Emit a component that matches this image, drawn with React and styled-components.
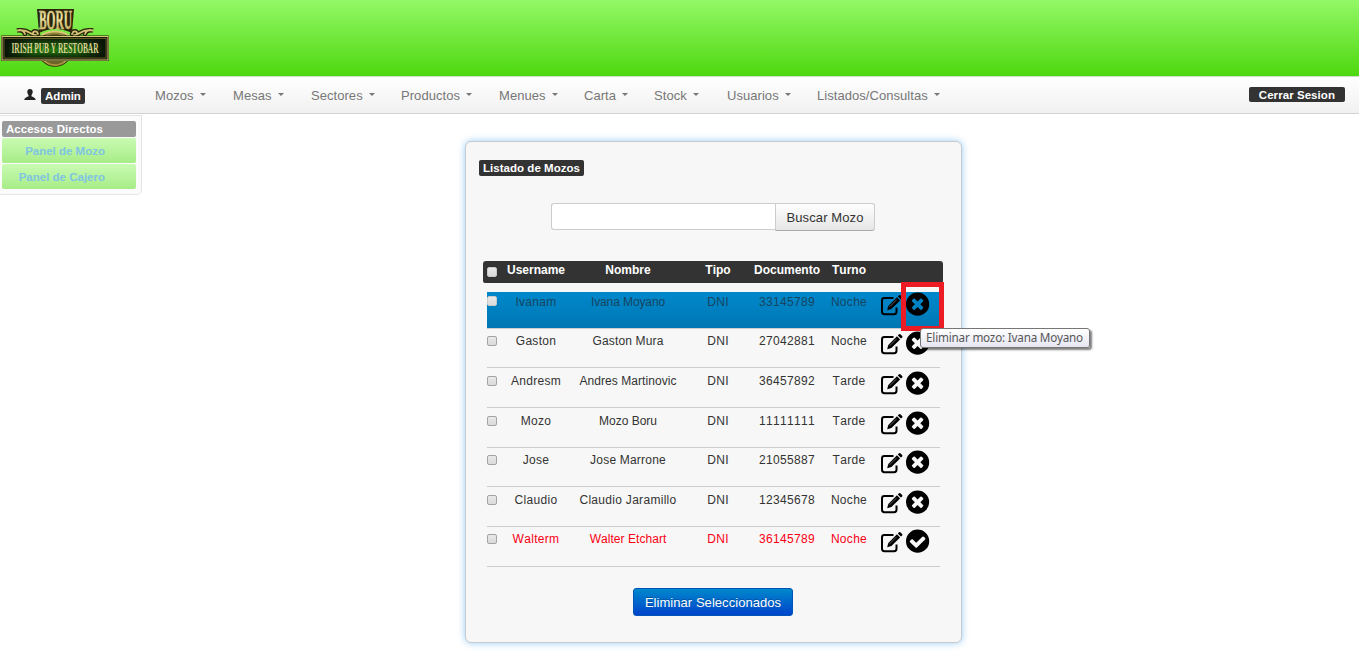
import React from "react";
import styled, { createGlobalStyle, css } from "styled-components";

const GlobalStyle = createGlobalStyle`
  *, *::before, *::after { box-sizing: border-box; }
  html, body { margin: 0; background: #fff; overflow: hidden; }
  body { font-family: "Liberation Sans", Arial, sans-serif; font-size: 13px; color: #333; font-kerning: none; }
`;

const Page = styled.div`
  display: flex;
  flex-direction: column;
  height: 665px;
`;

const Banner = styled.header`
  flex: none;
  height: 76px;
  background: linear-gradient(#93f866, #4ed80f);
`;

const Navbar = styled.nav`
  flex: none;
  display: flex;
  align-items: flex-start;
  height: 38px;
  border-top: 1px solid #d0dccb;
  border-bottom: 1px solid #d2d2d2;
  background: linear-gradient(#fff, #f1f1f1);
`;

const User = styled.div`
  flex: none;
  display: flex;
  width: 155px;
  padding: 11px 0 0 24px;
  gap: 5px;
`;

const Label = styled.span`
  display: block;
  height: ${(p) => p.$h || 16}px;
  line-height: 16px;
  padding: 0 ${(p) => p.$px || 4}px;
  border-radius: 2px;
  background: ${(p) => (p.$muted ? "#999" : "#333")};
  color: #fff;
  font-size: 11.5px;
  font-weight: bold;
  letter-spacing: ${(p) => p.$ls || 0.03}px;
  white-space: nowrap;
`;

const Menu = styled.ul`
  display: flex;
  flex: 1;
  margin: 0;
  padding: 0;
  list-style: none;
`;

const MenuItem = styled.li`
  flex: none;
  display: flex;
  width: ${(p) => p.$w}px;
  height: 36px;
  line-height: 37px;
  color: #777;
  letter-spacing: 0.05px;
  white-space: nowrap;

  &::after {
    content: "";
    margin: 16px 0 0 6px;
    width: 0;
    height: 0;
    border: 3.5px solid transparent;
    border-top-color: #777;
    border-bottom: 0;
  }
`;

const Logout = styled.div`
  padding: 10px 14px 0 0;
`;

const Body = styled.div`
  display: flex;
  align-items: flex-start;
`;

const Sidebar = styled.aside`
  flex: none;
  display: flex;
  flex-direction: column;
  gap: 1px;
  width: 142px;
  height: 80px;
  margin-top: 1px;
  padding: 5px 5px 0 2px;
  border: 1px solid #e4e4e4;
  border-left: 0;
  border-radius: 0 0 5px 0;
  background: #fbfbfb;
`;

const Shortcut = styled.a`
  height: 25px;
  line-height: 26px;
  padding-right: 31px;
  border-radius: 2px;
  background: linear-gradient(#c9fbb3, #a7ec87);
  color: #80c4e1;
  font-size: 11.5px;
  font-weight: bold;
  text-align: right;
`;

const Card = styled.main`
  position: relative;
  width: 497px;
  height: 502px;
  margin: 27px 0 0 323px;
  padding: 18px 18px 0 13px;
  border: 1px solid #c6cbd0;
  border-radius: 6px;
  background: #f7f7f7;
  box-shadow: 0 0 7px rgba(82, 168, 236, 0.6);
`;

const Title = styled.div`
  display: flex;
`;

const Search = styled.form`
  display: flex;
  margin: 27px 0 0 72px;
`;

const SearchInput = styled.input`
  width: 224px;
  height: 27px;
  border: 1px solid #ccc;
  border-right: 0;
  border-radius: 3px 0 0 3px;
  background: #fff;
`;

const SearchButton = styled.button`
  width: 100px;
  height: 28px;
  padding: 0;
  border: 1px solid #ccc;
  border-bottom-color: #aaa;
  border-radius: 0 3px 3px 0;
  background: linear-gradient(#fefefe, #e6e6e6);
  color: #333;
  font: 13px "Liberation Sans", Arial, sans-serif;
  letter-spacing: 0.1px;
`;

const columns = "12px 74px 110px 70px 68px 56px 1fr";

const TableHead = styled.div`
  display: grid;
  grid-template-columns: ${columns};
  width: 460px;
  height: 22px;
  margin: 30px 0 9px 4px;
  padding: 0 0 0 4px;
  border-radius: 3px 3px 2px 2px;
  background: #333;
  color: #fff;
  font-size: 12px;
  font-weight: bold;
  line-height: 18px;
  text-align: center;
`;

const Row = styled.div`
  display: grid;
  grid-template-columns: ${columns};
  width: 453px;
  height: 39.67px;
  margin-left: 8px;
  padding-top: 2.6px;
  border-bottom: 1px solid #ccc;
  color: ${(p) => (p.$inactive ? "#fa0014" : "#333")};
  font-size: 12px;
  letter-spacing: 0.3px;
  line-height: 20px;
  text-align: center;
  white-space: nowrap;
  ${(p) =>
    p.$hovered &&
    css`
      height: 36.6px;
      padding-top: 0;
      background: linear-gradient(#08c, #0077b3);
      color: #17455f;
    `}
`;

const FullName = styled.span`
  letter-spacing: ${(p) => p.$ls}px;
`;

const Check = styled.i`
  display: block;
  width: 10px;
  height: 10px;
  margin-top: ${(p) => p.$top}px;
  border: 1px solid ${(p) => (p.$light ? "#c9c9c9" : "#a3a3a3")};
  border-radius: 2px;
  background: linear-gradient(#e9e9e9, #dadada);
`;

const Actions = styled.div`
  display: flex;
  gap: 3.4px;
  padding-left: 3px;
  color: #000;
`;

const SubmitRow = styled.div`
  display: flex;
  margin: 21px 0 0 154px;
`;

const DeleteButton = styled.button`
  width: 160px;
  height: 28px;
  padding: 1px 0 0;
  border: 1px solid #0055b8;
  border-radius: 3px;
  background: linear-gradient(#0088cc, #0044cc);
  color: #fff;
  font: 13px "Liberation Sans", Arial, sans-serif;
  letter-spacing: 0.05px;
  text-shadow: 0 -1px 0 rgba(0, 0, 0, 0.25);
`;

const Highlight = styled.div`
  position: absolute;
  left: 435px;
  top: 140px;
  width: 43px;
  height: 49px;
  border: 5px solid #ed1c24;
`;

const Tooltip = styled.div`
  position: absolute;
  left: 454px;
  top: 186px;
  width: 170px;
  height: 20px;
  padding-right: 1px;
  border: 1px solid #767676;
  border-radius: 3px;
  background: linear-gradient(#fff, #e5e6f1);
  box-shadow: 2px 2px 2px rgba(0, 0, 0, 0.5);
  color: #575757;
  font: 11.7px/17px "Noto Sans", "Open Sans", sans-serif;
  letter-spacing: -0.2px;
  text-align: center;
  white-space: nowrap;
`;

const Svg = styled.svg`
  display: block;
  flex: none;
  overflow: visible;
`;

const disc = "M896 128a768 768 0 1 0 0 1536a768 768 0 1 0 0-1536z";
const cross =
  "M1277 1122q0-26-19-45l-181-181 181-181q19-19 19-45 0-27-19-46l-90-90q-19-19-46-19-26 0-45 19l-181 181-181-181q-19-19-45-19-27 0-46 19l-90 90q-19 19-19 46 0 26 19 45l181 181-181 181q-19 19-19 45 0 27 19 46l90 90q19 19 46 19 26 0 45-19l181-181 181 181q19 19 45 19 27 0 46-19l90-90q19-19 19-46z";
const tick =
  "M1412 734q0-28-18-46l-91-90q-19-19-45-19t-45 19l-408 407-226-226q-19-19-45-19t-45 19l-91 90q-18 18-18 46 0 27 18 45l362 362q19 19 45 19 27 0 46-19l543-543q18-18 18-45z";

// A filled disc with the cross or tick cut out of it.
function StatusIcon({ inactive }) {
  return (
    <Svg width="23.2" height="23.2" viewBox="128 90 1536 1536">
      <path fillRule="evenodd" d={disc + (inactive ? tick : cross)} />
    </Svg>
  );
}

function EditIcon() {
  return (
    <Svg width="23" height="26" viewBox="0 0 23 26">
      <path
        d="M13.5 6H4.4Q2 6 2 8.4V19.8Q2 22.2 4.4 22.2H14.1Q16.5 22.2 16.5 19.8V15.5"
        fill="none"
        stroke="#000"
        strokeWidth="2"
      />
      <path d="M7.2 18.2L8.3 14L17 5.3L20.1 8.4L11.4 17.1Z" />
      <path d="M17.8 4.5L19 3.3Q19.8 2.7 20.6 3.4L22.1 4.9Q22.8 5.7 22.2 6.4L20.9 7.6Z" />
      <path d="M9.6 14.8L16.6 7.8" stroke="#bbb" strokeWidth=".5" />
    </Svg>
  );
}

function UserIcon() {
  return (
    <Svg width="12" height="14" viewBox="0 0 12 14">
      <path
        fill="#222"
        d="M6 1C7.8 1 8.8 2.2 8.7 4C8.6 5.4 8.1 6.3 7.5 7V8.2C8.3 9 11.7 9.4 11.7 12H.3C.3 9.4 3.7 9 4.5 8.2V7C3.9 6.3 3.4 5.4 3.3 4C3.2 2.2 4.2 1 6 1Z"
      />
    </Svg>
  );
}

const LogoText = styled.text`
  font-family: "Liberation Serif", serif;
  font-weight: bold;
`;

function Logo() {
  return (
    <Svg width="112" height="76" viewBox="0 0 112 76">
      <defs>
        <linearGradient id="gold" x1="0" y1="0" x2="0" y2="1">
          <stop offset="0" stopColor="#8c7c32" />
          <stop offset=".45" stopColor="#f4ecae" />
          <stop offset="1" stopColor="#a28c38" />
        </linearGradient>
        <linearGradient id="board" x1="0" y1="0" x2="0" y2="1">
          <stop offset="0" stopColor="#0e2008" />
          <stop offset=".6" stopColor="#23780f" />
          <stop offset="1" stopColor="#0d2407" />
        </linearGradient>
        <linearGradient id="boardEdge">
          <stop offset="0" stopColor="#091106" />
          <stop offset=".3" stopColor="#091106" stopOpacity="0" />
          <stop offset=".7" stopColor="#091106" stopOpacity="0" />
          <stop offset="1" stopColor="#091106" />
        </linearGradient>
      </defs>
      <circle cx="55" cy="49" r="17.8" fill="#2c290c" />
      <circle cx="55" cy="49" r="16" fill="#6d6428" stroke="url(#gold)" strokeWidth="1.8" />
      <g fill="none" stroke="#2b280b" strokeWidth="4.4" strokeLinecap="round">
        <path d="M36 35C31 36 29 28 17 30.5Q23 29 25 34M38 34C37 30 33 31 33 33.5M74 35C79 36 81 28 93 30.5Q87 29 85 34M72 34C73 30 77 31 77 33.5" />
      </g>
      <g fill="none" stroke="#d5c477" strokeWidth="1.8" strokeLinecap="round">
        <path d="M36 35C31 36 29 28 17 30.5Q23 29 25 34M38 34C37 30 33 31 33 33.5M74 35C79 36 81 28 93 30.5Q87 29 85 34M72 34C73 30 77 31 77 33.5" />
      </g>
      <path d="M37 9H74L72 33Q55 25 39 33Z" fill="#2b260b" />
      <LogoText x="39" y="28.5" fontSize="28" textLength="33" lengthAdjust="spacingAndGlyphs" fill="url(#gold)" stroke="#e9dd94" strokeWidth=".5">
        BORU
      </LogoText>
      <path d="M41 35.5Q55 27.5 69 35.5" fill="none" stroke="#d6c675" strokeWidth="1.8" />
      <rect x="1" y="35.5" width="108" height="25.5" rx="1" fill="#1b1c08" />
      <rect x="2" y="36.5" width="106" height="23.5" fill="none" stroke="#d7c878" />
      <rect x="4" y="38.5" width="102" height="19.5" fill="url(#board)" />
      <rect x="4" y="38.5" width="102" height="19.5" fill="url(#boardEdge)" stroke="#7c7434" strokeWidth=".7" />
      <LogoText x="11.5" y="53.3" fontSize="15" textLength="87" lengthAdjust="spacingAndGlyphs" fill="#d9d193">
        IRISH PUB Y RESTOBAR
      </LogoText>
    </Svg>
  );
}

const menu = [
  ["Mozos", 78],
  ["Mesas", 78],
  ["Sectores", 90],
  ["Productos", 98],
  ["Menues", 85],
  ["Carta", 70],
  ["Stock", 73],
  ["Usuarios", 90],
  ["Listados/Consultas", 130],
];

// Username, full name, document, shift, letter spacing of the full name.
const waiters = [
  ["Ivanam", "Ivana Moyano", "33145789", "Noche", -0.1],
  ["Gaston", "Gaston Mura", "27042881", "Noche", 0.15],
  ["Andresm", "Andres Martinovic", "36457892", "Tarde", 0.07],
  ["Mozo", "Mozo Boru", "11111111", "Tarde", 0],
  ["Jose", "Jose Marrone", "21055887", "Tarde", 0.2],
  ["Claudio", "Claudio Jaramillo", "12345678", "Noche", 0.3],
  ["Walterm", "Walter Etchart", "36145789", "Noche", 0.05],
];

export default function App() {
  return (
    <Page>
      <GlobalStyle />
      <Banner>
        <Logo />
      </Banner>
      <Navbar>
        <User>
          <UserIcon />
          <Label>Admin</Label>
        </User>
        <Menu>
          {menu.map(([name, w]) => (
            <MenuItem key={name} $w={w}>{name}</MenuItem>
          ))}
        </Menu>
        <Logout>
          <Label $h={15} $px={10} $ls={0.06}>Cerrar Sesion</Label>
        </Logout>
      </Navbar>
      <Body>
        <Sidebar>
          <Label $muted>Accesos Directos</Label>
          <Shortcut>Panel de Mozo</Shortcut>
          <Shortcut>Panel de Cajero</Shortcut>
        </Sidebar>
        <Card>
          <Title>
            <Label>Listado de Mozos</Label>
          </Title>
          <Search>
            <SearchInput />
            <SearchButton type="button">Buscar Mozo</SearchButton>
          </Search>
          <TableHead>
            <Check $top={6} $light />
            <span>Username</span>
            <span>Nombre</span>
            <span>Tipo</span>
            <span>Documento</span>
            <span>Turno</span>
          </TableHead>
          {waiters.map(([user, name, doc, shift, spacing], i) => {
            const inactive = user === "Walterm";
            return (
              <Row key={user} $hovered={i === 0} $inactive={inactive}>
                <Check $top={i === 0 ? 4 : 5} $light={i === 0} />
                <span>{user}</span>
                <FullName $ls={spacing}>{name}</FullName>
                <span>DNI</span>
                <span>{doc}</span>
                <span>{shift}</span>
                <Actions>
                  <EditIcon />
                  <StatusIcon inactive={inactive} />
                </Actions>
              </Row>
            );
          })}
          <SubmitRow>
            <DeleteButton>Eliminar Seleccionados</DeleteButton>
          </SubmitRow>
          <Highlight />
          <Tooltip>Eliminar mozo: Ivana Moyano</Tooltip>
        </Card>
      </Body>
    </Page>
  );
}
